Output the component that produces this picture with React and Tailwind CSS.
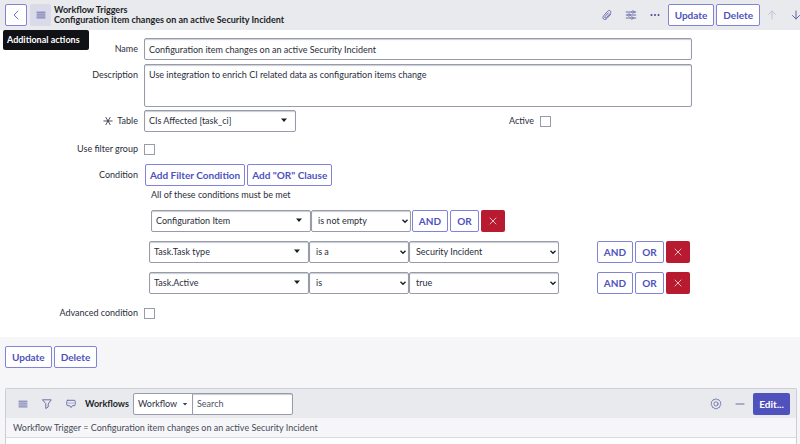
import React, { useState } from "react";

const Icon = ({ children, className = "" }) => (
  <svg
    viewBox="0 0 12 12"
    className={`h-3 w-3 shrink-0 ${className}`}
    fill="none"
    stroke="currentColor"
    strokeLinecap="round"
    strokeLinejoin="round"
    aria-hidden="true"
  >
    {children}
  </svg>
);

const IconButton = ({ label, children, className = "text-[#6062a5]" }) => (
  <button
    aria-label={label}
    className={`flex h-[22px] w-6 shrink-0 items-center justify-center ${className}`}
  >
    {children}
  </button>
);

const MenuIcon = () => (
  <Icon>
    <path d="M2 3.2h8M2 5.1h8M2 7h8M2 8.9h8" strokeWidth="0.9" />
  </Icon>
);

const Button = ({ children, className = "px-[6px]" }) => (
  <button
    className={`h-[22px] shrink-0 rounded-[2px] border border-[#8083d8] bg-white text-[10px] font-bold text-[#4f52bd] ${className}`}
  >
    {children}
  </button>
);

const fieldStyle =
  "rounded-[2px] border border-[#989caa] bg-white text-[9px] text-[#2a2d3a] shadow-[inset_0_1px_1px_#c9ccd2]";

const Select = ({ id, label, options, arrow = "chevron", className }) => (
  <div className={`relative h-[22px] shrink-0 ${className}`}>
    <select
      id={id}
      aria-label={label}
      className={`block h-full w-full appearance-none pr-5 ${
        arrow === "chevron" ? "pl-[6px]" : "pl-1"
      } ${fieldStyle}`}
    >
      {options.map((option) => (
        <option key={option}>{option}</option>
      ))}
    </select>
    {arrow === "chevron" ? (
      <svg
        viewBox="0 0 8 8"
        className="pointer-events-none absolute top-[7px] right-[2px] h-2 w-2 text-[#1c1e26]"
        fill="none"
        stroke="currentColor"
        strokeWidth="1.4"
      >
        <path d="M1.500 2.800 4 5.200l2.500-2.400" />
      </svg>
    ) : (
      <svg
        viewBox="0 0 8 8"
        className="pointer-events-none absolute top-[6px] right-2 h-2 w-2 text-[#1c1e26]"
        fill="currentColor"
      >
        <path d="M1 2.500h6L4 6z" />
      </svg>
    )}
  </div>
);

const Checkbox = ({ id }) => (
  <input
    id={id}
    type="checkbox"
    className="block h-[11px] w-[11px] appearance-none border border-[#989caa] bg-white checked:bg-[#4f52bd]"
  />
);

const Label = ({ htmlFor, required, children }) => (
  <label
    htmlFor={htmlFor}
    className="flex items-center justify-end text-right"
  >
    {required && (
      <Icon className="mr-1 h-[10px] w-[10px]">
        <path d="M1 6h10M3.500 1.700l5 8.600M8.500 1.700l-5 8.600" strokeWidth="1" />
      </Icon>
    )}
    {children}
  </label>
);

const RowActions = ({ className = "" }) => (
  <div className={`flex shrink-0 gap-[2px] ${className}`}>
    <Button className="w-9">AND</Button>
    <Button className="w-[29px]">OR</Button>
    <button
      aria-label="Remove condition"
      className="flex h-[22px] w-6 items-center justify-center rounded-[2px] bg-[#b81a2f] text-[#f6cfd4]"
    >
      <Icon>
        <path d="M3 3l6 6M9 3l-6 6" strokeWidth="0.9" />
      </Icon>
    </button>
  </div>
);

const Header = () => (
  <header className="flex h-[30px] items-center overflow-hidden bg-[#e9eaed] pl-[5px]">
    <button
      aria-label="Back"
      className="flex h-[22px] w-[22px] shrink-0 items-center justify-center rounded-[2px] border border-[#8083d8] bg-white text-[#5e61c4]"
    >
      <Icon>
        <path d="M8 2 4 6l4 4" strokeWidth="0.9" />
      </Icon>
    </button>
    <button
      aria-label="Additional actions"
      aria-describedby="actions-tip"
      className="ml-[3px] flex h-[22px] w-[21px] shrink-0 items-center justify-center rounded-[2px] bg-[#dadae8] text-[#6062a5]"
    >
      <MenuIcon />
    </button>
    <h1 className="ml-[3px] text-[9px] leading-[10px] font-bold whitespace-nowrap text-[#1c1e26]">
      <span className="block">Workflow Triggers</span>
      <span className="block">
        Configuration item changes on an active Security Incident
      </span>
    </h1>
    <div className="-mr-2 ml-auto flex shrink-0 items-center">
      <IconButton label="Attachments">
        <Icon>
          <path
            d="M9.8 5.2 6 9.4C4.900 10.600 3.400 10.800 2.500 10 1.600 9.100 1.800 7.700 2.800 6.600L6.600 2.300C7.400 1.400 8.600 1.200 9.300 1.900 10 2.500 9.900 3.600 9.200 4.400L5.500 8.500C5 9 4.400 9.100 4 8.800 3.600 8.400 3.700 7.900 4.200 7.300L7.300 3.900"
            strokeWidth="0.9"
          />
        </Icon>
      </IconButton>
      <IconButton label="Personalize form">
        <Icon>
          <path
            d="M1.200 3h5.300M9.300 3h1.500M1.200 6h1.500M5.300 6h5.500M1.200 9h4.300M8.300 9h2.500"
            strokeWidth="0.9"
          />
          <circle cx="7.900" cy="3" r="1.200" strokeWidth="0.8" />
          <circle cx="4" cy="6" r="1.200" strokeWidth="0.8" />
          <circle cx="6.900" cy="9" r="1.200" strokeWidth="0.8" />
        </Icon>
      </IconButton>
      <IconButton label="More options" className="text-[#444690]">
        <Icon>
          <path d="M2.500 6h.01M6 6h.01M9.500 6h.01" strokeWidth="2" />
        </Icon>
      </IconButton>
      <div className="ml-[1px] flex gap-[2px]">
        <Button>Update</Button>
        <Button>Delete</Button>
      </div>
      <IconButton label="Previous record" className="text-[#bdbdd6]">
        <Icon>
          <path d="M6 10V2M2.500 5.500 6 2l3.500 3.500" strokeWidth="0.9" />
        </Icon>
      </IconButton>
      <IconButton label="Next record">
        <Icon>
          <path d="M6 2v8M2.500 6.500 6 10l3.500-3.500" strokeWidth="1" />
        </Icon>
      </IconButton>
    </div>
  </header>
);

const TriggerForm = () => {
  const [name, setName] = useState(
    "Configuration item changes on an active Security Incident"
  );
  const [description, setDescription] = useState(
    "Use integration to enrich CI related data as configuration items change"
  );

  return (
    <form
      onSubmit={(e) => e.preventDefault()}
      className="grid grid-cols-[138px_1fr] gap-x-[6px] bg-white pt-2 pr-[108px] pb-[13px]"
    >
      <Label htmlFor="name">Name</Label>
      <input
        id="name"
        value={name}
        onChange={(e) => setName(e.target.value)}
        className={`h-[22px] w-full px-1 ${fieldStyle}`}
      />

      <div className="mt-1 flex h-[22px] items-center justify-end">
        <Label htmlFor="description">Description</Label>
      </div>
      <textarea
        id="description"
        value={description}
        onChange={(e) => setDescription(e.target.value)}
        className={`mt-1 block h-[43px] w-full resize-none px-1 py-[3px] leading-[14px] ${fieldStyle}`}
      />

      <div className="mt-[3px] flex items-center justify-end">
        <Label htmlFor="table" required>
          Table
        </Label>
      </div>
      <div className="mt-[3px] flex items-center">
        <Select
          id="table"
          arrow="triangle"
          options={["CIs Affected [task_ci]"]}
          className="w-[152px]"
        />
        <div className="ml-auto flex items-center gap-[6px] pr-[141px]">
          <label htmlFor="active">Active</label>
          <Checkbox id="active" />
        </div>
      </div>

      <div className="mt-[6px] flex h-[22px] items-center justify-end">
        <Label htmlFor="filter-group">Use filter group</Label>
      </div>
      <div className="mt-[6px] flex h-[22px] items-center">
        <Checkbox id="filter-group" />
      </div>

      <div className="mt-1 flex h-[22px] items-center justify-end">
        Condition
      </div>
      <div className="mt-1 pl-[1px]">
        <div className="flex gap-[2px]">
          <Button className="px-1">Add Filter Condition</Button>
          <Button className="px-1">Add "OR" Clause</Button>
        </div>
        <p className="pt-[2px] pl-[6px] leading-[14px]">
          All of these conditions must be met
        </p>
        <div className="mt-2 space-y-[9px] pl-1">
          <div className="flex pl-[2px]">
            <Select
              label="Field"
              arrow="triangle"
              options={["Configuration Item"]}
              className="w-40"
            />
            <Select
              label="Operator"
              options={["is not empty"]}
              className="w-[100px]"
            />
            <RowActions className="ml-[1px]" />
          </div>
          <div className="flex">
            <Select
              label="Field"
              arrow="triangle"
              options={["Task.Task type"]}
              className="w-40"
            />
            <Select label="Operator" options={["is a"]} className="w-[100px]" />
            <Select
              label="Value"
              options={["Security Incident"]}
              className="w-[150px]"
            />
            <RowActions className="ml-auto pr-[2px]" />
          </div>
          <div className="flex">
            <Select
              label="Field"
              arrow="triangle"
              options={["Task.Active"]}
              className="w-40"
            />
            <Select label="Operator" options={["is"]} className="w-[100px]" />
            <Select label="Value" options={["true"]} className="w-[150px]" />
            <RowActions className="ml-auto pr-[2px]" />
          </div>
        </div>
      </div>

      <div className="mt-2 flex h-[22px] items-center justify-end">
        <Label htmlFor="advanced">Advanced condition</Label>
      </div>
      <div className="mt-2 flex h-[22px] items-center">
        <Checkbox id="advanced" />
      </div>
    </form>
  );
};

const WorkflowList = () => (
  <section className="mt-5 mr-[3px] ml-[5px] rounded-t-[2px] border border-b-0 border-[#cbced6]">
    <div className="flex h-[29px] items-center bg-[#e9eaed] pr-[6px] pl-[5px]">
      <IconButton label="List menu">
        <MenuIcon />
      </IconButton>
      <IconButton label="Filter">
        <Icon>
          <path d="M1.800 1.800h8.400L7.200 6v3L4.800 10.500V6z" strokeWidth="0.9" />
        </Icon>
      </IconButton>
      <IconButton label="Activity">
        <Icon>
          <path
            d="M2.800 2.300h6.400q1 0 1 1v3.400q0 1-1 1H7.300L6 9.600 4.700 7.700H2.800q-1 0-1-1V3.300q0-1 1-1z"
            strokeWidth="0.9"
          />
          <path d="M4 5h.01M6 5h.01M8 5h.01" strokeWidth="1.1" />
        </Icon>
      </IconButton>
      <h2 className="ml-[2px] text-[9px] font-bold text-[#1c1e26]">
        Workflows
      </h2>
      <div className="ml-1 flex">
        <div className="relative h-[22px]">
          <select
            aria-label="Search column"
            className="h-full w-[60px] appearance-none rounded-l-[2px] border border-[#989caa] bg-white pl-1 text-[#2a2d3a]"
          >
            <option>Workflow</option>
          </select>
          <svg
            viewBox="0 0 6 6"
            className="pointer-events-none absolute top-2 right-[5px] h-[6px] w-[6px]"
            fill="#3c3f4c"
          >
            <path d="M.8 2h4.400L3 4.500z" />
          </svg>
        </div>
        <input
          aria-label="Search"
          placeholder="Search"
          className="-ml-[1px] h-[22px] w-[101px] rounded-r-[2px] border border-[#989caa] bg-white px-1 text-[9px] shadow-[inset_0_1px_1px_#c9ccd2] placeholder:text-[#4f5362]"
        />
      </div>
      <div className="ml-auto flex items-center">
        <IconButton label="List settings">
          <Icon>
            <path
              d="M6 .9 7.300 1.600 8.800 1.700 9.500 3 10.700 3.900 10.500 5.400 10.900 6.800 9.900 7.900 9.500 9.400 8.100 9.800 6.900 10.800 6 10.500 5.100 10.800 3.900 9.800 2.500 9.400 2.100 7.900 1.100 6.800 1.500 5.400 1.300 3.900 2.500 3 3.200 1.700 4.700 1.600z"
              strokeWidth="0.8"
            />
            <circle cx="6" cy="5.900" r="2.100" strokeWidth="0.8" />
          </Icon>
        </IconButton>
        <IconButton label="Collapse list">
          <Icon>
            <path d="M2 6h8" strokeWidth="0.9" />
          </Icon>
        </IconButton>
        <button className="ml-[1px] h-[22px] w-[37px] rounded-[2px] bg-[#4f52bd] text-[10px] font-bold text-white">
          Edit...
        </button>
      </div>
    </div>
    <div className="flex h-5 items-center border-b border-[#d9dbe1] bg-[#f6f6f8] pl-[7px]">
      <a href="#workflows" className="text-[#474b59]">
        Workflow Trigger = Configuration item changes on an active Security
        Incident
      </a>
    </div>
    <div className="h-[6px] bg-white" />
  </section>
);

const App = () => {
  return (
    <div className="relative h-screen overflow-hidden bg-[#f6f6f8] font-['Lato',sans-serif] text-[9px] leading-[14px] text-[#2a2d3a]">
      <Header />
      <div
        id="actions-tip"
        role="tooltip"
        className="absolute top-[30px] left-[3px] flex h-5 w-[86px] items-center rounded-[2px] bg-[#101216] px-1 font-bold text-white"
      >
        Additional actions
      </div>
      <TriggerForm />
      <div className="mt-[9px] flex gap-[2px] pl-[5px]">
        <Button>Update</Button>
        <Button>Delete</Button>
      </div>
      <WorkflowList />
    </div>
  );
};

export default App;
